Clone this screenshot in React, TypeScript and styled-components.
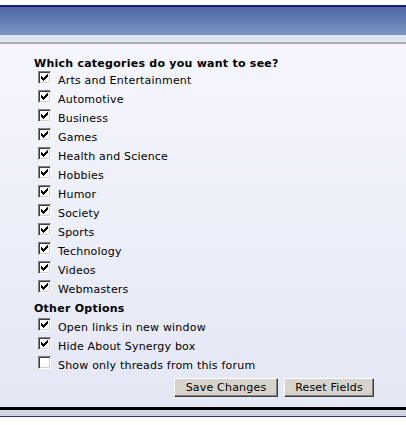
import React from "react"
import styled, { createGlobalStyle } from "styled-components"

const GlobalStyle = createGlobalStyle`
  html, body {
    margin: 0;
    padding: 0;
    background: #ffffff;
  }
  body {
    font-family: "DejaVu Sans", Verdana, sans-serif;
    font-size: 11px;
    color: #000000;
  }
`

const categories = [
    "Arts and Entertainment",
    "Automotive",
    "Business",
    "Games",
    "Health and Science",
    "Hobbies",
    "Humor",
    "Society",
    "Sports",
    "Technology",
    "Videos",
    "Webmasters",
]

const otherOptions = [
    { label: "Open links in new window", checked: true },
    { label: "Hide About Synergy box", checked: true },
    { label: "Show only threads from this forum", checked: false },
]

const Panel = styled.div`
    padding-top: 5px;
    width: 406px;
`

const TopLine = styled.div`
    height: 2px;
    background: #1c2468;
`

const Header = styled.div`
    height: 28px;
    background: linear-gradient(to bottom, #4b66a2, #7d96c6);
`

const SubStrip = styled.div`
    height: 7px;
    background: #e0e3f1;
    border-bottom: 2px solid #a8aaae;
`

const Content = styled.div`
    background: linear-gradient(to bottom, #f5f6fd, #e4e7f4);
    padding: 13px 0 10px 34px;
`

const Heading = styled.div<{ $spaced?: boolean }>`
    font-weight: bold;
    font-size: 11px;
    line-height: 14px;
    letter-spacing: 0.25px;
    margin-top: ${(p) => (p.$spaced ? "3px" : "0")};
    margin-bottom: ${(p) => (p.$spaced ? "2px" : "0")};
`

const List = styled.div`
    display: flex;
    flex-direction: column;
    padding-left: 4px;
`

const Row = styled.label`
    display: flex;
    align-items: center;
    height: 19px;
    gap: 7px;
`

const BoxFrame = styled.span`
    box-sizing: border-box;
    width: 13px;
    height: 13px;
    display: inline-flex;
    align-items: center;
    justify-content: center;
    background: #ffffff;
    border-top: 1px solid #808080;
    border-left: 1px solid #808080;
    border-right: 1px solid #ffffff;
    border-bottom: 1px solid #ffffff;
    box-shadow: inset 1px 1px 0 #404040, inset -1px -1px 0 #d4d0c8;
    position: relative;
    top: -3px;
`

const LabelText = styled.span`
    line-height: 14px;
    letter-spacing: 0.2px;
`

const Buttons = styled.div`
    display: flex;
    gap: 6px;
    padding-left: 140px;
    margin-top: 3px;
`

const Button = styled.button<{ $width: number }>`
    box-sizing: border-box;
    width: ${(p) => p.$width}px;
    height: 19px;
    padding: 0;
    font-family: "DejaVu Sans", Verdana, sans-serif;
    font-size: 11px;
    letter-spacing: 0.2px;
    color: #000000;
    background: #d6d3cc;
    border-top: 1px solid #ffffff;
    border-left: 1px solid #ffffff;
    border-right: 1px solid #404040;
    border-bottom: 1px solid #404040;
    box-shadow: inset -1px -1px 0 #808080;
`

const BottomLine = styled.div`
    height: 3px;
    background: #000000;
`

const BottomStrip = styled.div`
    height: 6px;
    background: #d2d4df;
    border-bottom: 1px solid #2a2c9a;
`

const Check: React.FunctionComponent<{ checked: boolean }> = ({ checked }) => (
    <BoxFrame>
        {checked && (
            <svg width="7" height="7" viewBox="0 0 7 7">
                <path d="M0 2h1v1h1v1h1v-1h1v-1h1v-1h1v-1h1v3h-1v1h-1v1h-1v1h-1v1h-1v-1h-1v-1h-1z" fill="#000" />
            </svg>
        )}
    </BoxFrame>
)

const App: React.FunctionComponent = () => {
    return (
        <>
            <GlobalStyle />
            <Panel>
                <TopLine />
                <Header />
                <SubStrip />
                <Content>
                    <Heading>Which categories do you want to see?</Heading>
                    <List>
                        {categories.map((c) => (
                            <Row key={c}>
                                <Check checked={true} />
                                <LabelText>{c}</LabelText>
                            </Row>
                        ))}
                    </List>
                    <Heading $spaced>Other Options</Heading>
                    <List>
                        {otherOptions.map((o) => (
                            <Row key={o.label}>
                                <Check checked={o.checked} />
                                <LabelText>{o.label}</LabelText>
                            </Row>
                        ))}
                    </List>
                    <Buttons>
                        <Button $width={104}>Save Changes</Button>
                        <Button $width={90}>Reset Fields</Button>
                    </Buttons>
                </Content>
                <BottomLine />
                <BottomStrip />
            </Panel>
        </>
    )
}

export default App
